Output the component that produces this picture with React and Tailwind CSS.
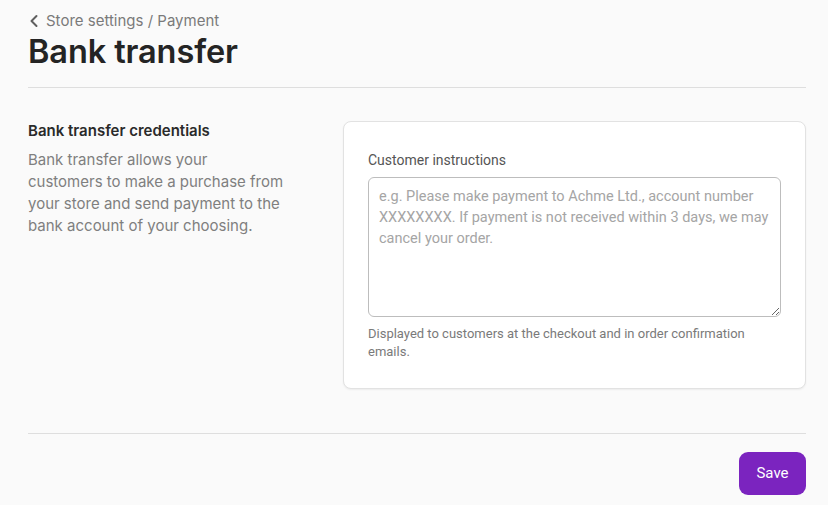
import { ChevronLeft } from "lucide-react";

const rubik = "font-['Inter','Noto_Sans',sans-serif]";
const roboto = "font-['Roboto','Liberation_Sans',sans-serif]";

export default function App() {
  return (
    <main className={`min-h-screen bg-[#fafafa] pl-[28px] pr-[22px] text-[#262626] ${rubik}`}>
      <header className="pt-[11px]">
        <a className="flex items-center gap-[2px] text-[15px] leading-[20px] text-[#7a7a7a]" href="#">
          <ChevronLeft className="-ml-[4px] h-[20px] w-[20px] text-[#5f5f5f]" strokeWidth={2.4} />
          Store settings / Payment
        </a>
        <h1 className="mt-[1px] text-[32.5px] font-semibold leading-[40px] tracking-[-0.1px] text-[#242424]">Bank transfer</h1>
      </header>

      <hr className="mt-[15px] border-[#dedede]" />

      <section className="flex gap-[36px] pt-[33px] pb-[44px]">
        <div className="w-[279px] shrink-0">
          <h2 className="text-[15px] font-semibold leading-[20px] text-[#2a2a2a]">Bank transfer credentials</h2>
          <p className="mt-[8px] w-[256px] text-[15px] leading-[22px] text-[#7f7f7f]">
            Bank transfer allows your customers to make a purchase from your store and send payment to the bank account of your choosing.
          </p>
        </div>

        <div className={`flex-1 rounded-[8px] border border-[#e2e2e2] bg-white px-[24px] pt-[28px] pb-[27px] shadow-[0_1px_2px_rgba(0,0,0,0.06)] ${roboto}`}>
          <label className="block text-[14px] leading-[20px] text-[#555]" htmlFor="instrucciones">
            Customer instructions
          </label>
          <textarea
            id="instrucciones"
            className="mt-[7px] block h-[140px] w-full rounded-[6px] border border-[#bdbdbd] px-[10px] py-[8px] text-[14.5px] leading-[21px] text-[#333] placeholder:text-[#a5a5a5] focus:outline-none"
            placeholder="e.g. Please make payment to Achme Ltd., account number XXXXXXXX. If payment is not received within 3 days, we may cancel your order."
          />
          <p className="mt-[8px] text-[13px] leading-[18px] text-[#7a7a7a]">
            Displayed to customers at the checkout and in order confirmation emails.
          </p>
        </div>
      </section>

      <hr className="border-[#dedede]" />

      <footer className="flex justify-end pt-[18px]">
        <button className={`h-[43px] w-[67px] rounded-[9px] bg-[#7b24bf] text-[15px] leading-[43px] text-white ${roboto}`} type="button">
          Save
        </button>
      </footer>
    </main>
  );
}
